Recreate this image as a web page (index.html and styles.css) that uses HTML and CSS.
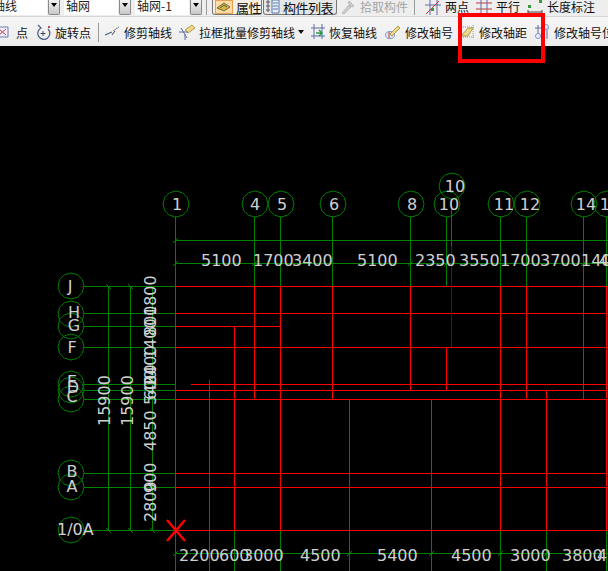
FILE: index.html
```html
<!DOCTYPE html>
<html lang="en">
<head>
    <meta charset="UTF-8">
    <title>修改轴距</title>
    <link rel="stylesheet" href="styles.css">
</head>
<body>
<div class="page">
    <div class="row1">
        <div class="combo c1">轴线</div><div class="arrow"></div>
        <div class="combo c2">轴网</div><div class="arrow"></div>
        <div class="combo c2">轴网-1</div><div class="arrow"></div>
        <div class="sep s1"></div>
        <div class="btn on">
            <svg class="hot" width="18" height="14" viewBox="0 0 18 14"><path d="M2 8 9 3l6 4-6 4z" fill="#d8b24a" stroke="#7a6a30"/><path d="M5 8l4-3 3 2" fill="none" stroke="#3d6b3a"/></svg>
            属性
        </div>
        <div class="btn list">
            <svg width="14" height="14" viewBox="0 0 14 14"><path d="M1 1h2v2H1zM1 5h2v2H1zM1 9h2v2H1z" fill="none" stroke="#556"/><path d="M6 0h7v13H6z" fill="#e6eefa" stroke="#5a78a8"/><path d="M7 3h5M7 6h5M7 9h5" stroke="#5a78a8"/></svg>
            构件列表
        </div>
        <div class="tool off">
            <svg width="16" height="16" viewBox="0 0 16 16"><path d="M2 14 9 6l2 2-7 7zM9 2l5 5-2 1-4-4z" fill="#ccc" stroke="#bbb"/></svg>
            <span>拾取构件</span>
        </div>
        <div class="sep s2"></div>
        <div class="tool">
            <svg width="16" height="16" viewBox="0 0 16 16"><path d="M5 1v15M12 1v15M0 6h16" stroke="#5b6fa8" fill="none"/><path d="M1 15 14 2" stroke="#c33"/><path d="M6 9h3v3H6z" fill="#3a9a3a"/></svg>
            <span>两点</span>
        </div>
        <div class="tool">
            <svg width="16" height="16" viewBox="0 0 16 16"><path d="M0 4h16M0 10h16" stroke="#c33"/><path d="M5 0v15M11 0v15" stroke="#5b6fa8"/></svg>
            <span>平行</span>
        </div>
        <div class="tool">
            <svg width="16" height="16" viewBox="0 0 16 16"><path d="M1 6h3v3H1z" fill="#3a9a3a"/><path d="M12 1h3v3h-3z" fill="#3a9a3a"/><path d="M1 11v4M15 11v4M1 13h14" stroke="#444"/></svg>
            <span>长度标注</span>
        </div>
    </div>
    <div class="row2">
        <div class="tool first">
            <svg width="16" height="16" viewBox="0 0 16 16"><path d="M1 3h11v10H1z" fill="#eef" stroke="#6a7fb0"/><path d="M3 5l7 6M10 5l-7 6" stroke="#c44"/></svg>
            <span>点</span>
        </div>
        <div class="tool">
            <svg width="16" height="16" viewBox="0 0 16 16"><path d="M3 1 6 4a6 6 0 1 0 7 1" fill="none" stroke="#4a5f8a" stroke-width="1.3"/><path d="M8 7v5M5.500 9.500h5" stroke="#445"/><path d="M13 2h2v2h-2z" fill="#c44"/></svg>
            <span>旋转点</span>
        </div>
        <div class="sep s3"></div>
        <div class="tool">
            <svg width="16" height="16" viewBox="0 0 16 16"><path d="M1 11 8 8" stroke="#4a5f8a" stroke-width="1.300"/><path d="M9 7l6-4" stroke="#888"/><path d="M8 11l3-4" stroke="#445"/></svg>
            <span>修剪轴线</span>
        </div>
        <div class="tool batch">
            <svg width="16" height="16" viewBox="0 0 16 16"><path d="M6 6l7-5 3 3-7 5z" fill="#ecd98a" stroke="#b59a4a"/><path d="M0 8h9M2 4l6 10M6 10v6" stroke="#5b6fa8"/></svg>
            <span>拉框批量修剪轴线</span>
            <i class="caret"></i>
        </div>
        <div class="tool restore">
            <svg class="narrow" width="14" height="16" viewBox="0 0 14 16"><path d="M3 0v15M11 0v15M0 4h14M0 12h14" stroke="#5b6fa8"/><path d="M5 9h6M8 6l3 3-3 3" stroke="#2f9a4a" stroke-width="1.500" fill="none"/></svg>
            <span>恢复轴线</span>
        </div>
        <div class="tool renum">
            <svg width="16" height="16" viewBox="0 0 16 16"><ellipse cx="5" cy="11" rx="4.500" ry="3.500" fill="#dfe8f8" stroke="#7d9ad0"/><path d="M5 10 13 2l2 2-8 8z" fill="#ecd98a" stroke="#b59a4a"/><path d="M4 8v6" stroke="#c33"/></svg>
            <span>修改轴号</span>
        </div>
        <div class="tool">
            <svg width="16" height="16" viewBox="0 0 16 16"><path d="M2 1v14M14 1v14M0 3h16M0 13h16" stroke="#999" stroke-dasharray="1 1"/><path d="M3 11 9 4h5l-5 8H3z" fill="#ecd98a" stroke="#b59a4a"/></svg>
            <span>修改轴距</span>
        </div>
        <div class="tool">
            <svg width="16" height="16" viewBox="0 0 16 16"><path d="M4 1v14M13 1v14M1 4h14" stroke="#5b6fa8"/><circle cx="12" cy="3" r="2.500" fill="#eef" stroke="#7d9ad0"/><circle cx="4" cy="12" r="2.500" fill="#eef" stroke="#7d9ad0"/></svg>
            <span>修改轴号位</span>
        </div>
    </div>

    <svg class="plan" width="608" height="525" viewBox="0 46 608 525">
        <defs>
            <polygon id="bub" points="13,0 11.300,6.500 6.500,11.300 0,13 -6.500,11.300 -11.300,6.500 -13,0 -11.300,-6.500 -6.500,-11.300 0,-13 6.500,-11.300 11.300,-6.500"/>
        </defs>

        <!-- 轴线 -->
        <path class="axis" d="M175.500 240.500H608M175.500 263.500H608M175.500 553.500H608
            M175.500 217V286M254.500 217V286M280.500 217V286M332.500 217V286M410.500 217V286M446.500 217V286M500.500 217V286M526.500 217V286M583.500 217V286M606.500 217V286M451.500 199V247
            M84 286.500H175M84 313.500H175M84 326.500H175M84 347.500H175M84 384.500H175M84 390.500H175M84 399.500H175M84 473.500H175M84 487.500H175M84 530.500H175
            M108.500 286V530M130.500 286V530M152.500 286V530
            M175.500 530V571M209.500 530V571M234.500 530V571M280.500 530V571M349.500 530V571M431.500 530V571M500.500 530V571M546.500 530V571M606.500 530V571"/>
        <path class="axis tick" d="M173 243 178 238M173 266 178 261M252 266 257 261M408 266 413 261M444 266 449 261M581 266 586 261
            M106 284 111 289M128 284 133 289M106 528 111 533M128 528 133 533M150 528 155 533
            M173 556 178 551M347 556 352 551M429 556 434 551M498 556 503 551M544 556 549 551"/>

        <!-- 墙 -->
        <path class="wall" d="M175 286.500H608M175 313.500H608M175 326.500H280M175 347.500H608M191 384.500H608M175 390.500H608M175 399.500H608M175 473.500H608M175 487.500H608M175 530.500H608
            M175.500 286V530M209.500 380V530M234.500 326V530M254.500 286V399M280.500 286V530M332.500 286V399M349.500 399V530M410.500 286V390M431.500 399V530M446.500 347V390M500.500 286V530M526.500 286V399M546.500 390V530M583.500 286V399M606.500 286V530"/>
        <path class="wall-dim" d="M451.500 247V347"/>
        <path class="cross" d="M167 520 185 541M185 520 167 541"/>

        <!-- 轴号 -->
        <g class="bubbles">
            <use href="#bub" x="176" y="204"/><use href="#bub" x="255" y="204"/><use href="#bub" x="281" y="204"/>
            <use href="#bub" x="333" y="204"/><use href="#bub" x="411" y="204"/><use href="#bub" x="447" y="204"/>
            <use href="#bub" x="452" y="186"/><use href="#bub" x="501" y="204"/><use href="#bub" x="527" y="204"/>
            <use href="#bub" x="584" y="204"/><use href="#bub" x="607" y="204"/>
            <use href="#bub" x="71" y="286"/><use href="#bub" x="71" y="314"/><use href="#bub" x="71" y="326"/>
            <use href="#bub" x="71" y="347"/><use href="#bub" x="71" y="384"/><use href="#bub" x="71" y="390"/>
            <use href="#bub" x="71" y="399"/><use href="#bub" x="71" y="473"/><use href="#bub" x="71" y="487"/>
            <use href="#bub" x="71" y="530"/>
        </g>
        <g class="num mid">
            <text x="177" y="210">1</text><text x="255" y="210">4</text><text x="282" y="210">5</text>
            <text x="334" y="210">6</text><text x="412" y="210">8</text><text x="449" y="210">10</text>
            <text x="455" y="192">10</text><text x="504" y="210">11</text><text x="530" y="210">12</text>
            <text x="586" y="210">14</text><text x="610" y="210">15</text>
            <text x="70" y="292">J</text><text x="74" y="318">H</text><text x="74" y="331">G</text>
            <text x="72" y="353">F</text><text x="72" y="387">E</text><text x="73" y="393">D</text><text x="72" y="402">C</text>
            <text x="72" y="477">B</text><text x="72" y="492">A</text>
        </g>
        <g class="num">
            <text x="57" y="535">1/0A</text>
            <text x="201" y="266">5100</text><text x="253" y="266">1700</text><text x="292" y="266">3400</text>
            <text x="357" y="266">5100</text><text x="415" y="266">2350</text><text x="459" y="266">3550</text>
            <text x="500" y="266">1700</text><text x="540" y="266">3700</text><text x="581" y="266">1400</text><text x="599" y="266">400</text>
            <text x="179" y="561">2200</text><text x="219" y="561">600</text><text x="243" y="561">3000</text>
            <text x="300" y="561">4500</text><text x="377" y="561">5400</text><text x="451" y="561">4500</text>
            <text x="510" y="561">3000</text><text x="562" y="561">3800</text><text x="597" y="561">400</text>
            <text transform="translate(110 426) rotate(-90)">15900</text>
            <text transform="translate(133 426) rotate(-90)">15900</text>
            <text transform="translate(156 522) rotate(-90)">2800</text>
            <text transform="translate(156 493) rotate(-90)">900</text>
            <text transform="translate(156 451) rotate(-90)">4850</text>
            <text transform="translate(156 405) rotate(-90)">5400</text>
            <text transform="translate(156 400) rotate(-90)">600</text>
            <text transform="translate(156 386) rotate(-90)">2400</text>
            <text transform="translate(156 359) rotate(-90)">1400</text>
            <text transform="translate(156 336) rotate(-90)">800</text>
            <text transform="translate(156 316) rotate(-90)">1800</text>
        </g>
    </svg>

    <div class="mark"></div>
</div>
</body>
</html>
```

FILE: styles.css
```css
*{
    margin:0;
    padding:0;
    box-sizing:border-box;
}
body{
    background:#000;
    overflow:hidden;
}
.page{
    position:relative;
    width:608px;
    height:571px;
    overflow:hidden;
    font-family:"Noto Sans CJK SC","Liberation Sans",sans-serif;
    font-size:12px;
    color:#111;
}

/* toolbar */
.row1{
    display:flex;
    align-items:flex-start;
    height:17px;
    background:#eeeeee;
    border-bottom:1px solid #d6d6d6;
    overflow:hidden;
}
.row1 > div{
    flex:none;
}
.row2{
    display:flex;
    align-items:center;
    height:29px;
    padding-top:1px;
    background:linear-gradient(#f6f6f6,#ececec);
    overflow:hidden;
    white-space:nowrap;
}
.combo{
    height:15px;
    line-height:12px;
    background:#fff;
    overflow:hidden;
    white-space:nowrap;
    color:#222;
}
.c1{
    width:47px;
    text-indent:-7px;
}
.c2{
    width:54px;
    margin-left:4px;
    padding-left:2px;
}
.arrow{
    position:relative;
    width:12px;
    height:15px;
    margin-left:1px;
    background:linear-gradient(#f2f2f2,#c9c9c9);
    border:1px solid #8a8a8a;
    border-top:0;
    border-radius:0 0 2px 2px;
}
.arrow:after{
    content:"";
    position:absolute;
    left:2px;
    top:3px;
    border:3px solid transparent;
    border-top:4px solid #000;
}
.sep{
    flex:none;
    width:1px;
    background:#9a9a9a;
}
.s1{
    height:15px;
    margin:0 5px 0 4px;
}
.s2{
    height:15px;
    margin:0 10px 0 -1px;
}
.s3{
    height:19px;
    margin:0 5px 0 0;
}
.btn{
    display:flex;
    align-items:center;
    gap:3px;
    height:15px;
    margin-right:1px;
    padding-left:2px;
    border:1px solid #777;
    border-top:0;
    border-radius:0 0 3px 3px;
    background:#f3f3f3;
    white-space:nowrap;
    font-size:13px;
    letter-spacing:-.5px;
}
.on{
    width:50px;
    background:#f6f0e2;
}
.hot{
    background:#fcdca8;
    outline:1px solid #e8a050;
    outline-offset:-1px;
}
.list{
    width:74px;
    margin-right:3px;
    background:#e6e6e6;
}
.tool{
    display:flex;
    flex:none;
    align-items:center;
    gap:4px;
    margin-right:7px;
}
.row1 .tool{
    height:13px;
    line-height:12px;
}
.off{
    color:#a5a5a5;
}
.first{
    margin-left:-4px;
}
.restore{
    margin-right:8px;
}
.renum{
    margin-right:6px;
}
.caret{
    width:0;
    height:0;
    margin-left:-1px;
    border:3px solid transparent;
    border-top:4px solid #111;
    border-bottom:0;
}

/* 红框 */
.mark{
    position:absolute;
    left:458px;
    top:13px;
    width:87px;
    height:50px;
    border:4px solid #f00;
}

/* drawing */
.plan{
    display:block;
    background:#000;
}
.plan path{
    fill:none;
}
.axis{
    stroke:#008000;
    shape-rendering:crispEdges;
}
.tick{
    shape-rendering:auto;
}
.wall{
    stroke:#f00;
    shape-rendering:crispEdges;
}
.wall-dim{
    stroke:#800000;
    shape-rendering:crispEdges;
}
.cross{
    stroke:#f00;
    stroke-width:2.500;
}
.bubbles{
    fill:none;
    stroke:#008000;
}
.num{
    font-family:"DejaVu Sans",sans-serif;
    font-size:16px;
    fill:#d0d0d0;
}
.mid{
    text-anchor:middle;
}
```
